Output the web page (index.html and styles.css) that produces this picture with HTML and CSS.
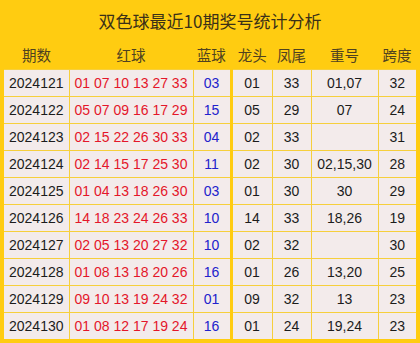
FILE: index.html
```html
<!DOCTYPE html>
<html lang="zh">
<head>
<meta charset="utf-8">
<link rel="stylesheet" href="styles.css">
</head>
<body>
<div class="panel">
  <div class="title">双色球最近10期奖号统计分析</div>
  <table class="stats">
    <colgroup>
      <col class="c-issue"><col class="c-red"><col class="c-blue"><col class="c-head"><col class="c-tail"><col class="c-rep"><col class="c-span">
    </colgroup>
    <thead>
      <tr><th>期数</th><th>红球</th><th>蓝球</th><th class="split">龙头</th><th>凤尾</th><th>重号</th><th>跨度</th></tr>
    </thead>
    <tbody>
      <tr><td>2024121</td><td class="red">01 07 10 13 27 33</td><td class="blue">03</td><td class="split">01</td><td>33</td><td>01,07</td><td>32</td></tr>
      <tr><td>2024122</td><td class="red">05 07 09 16 17 29</td><td class="blue">15</td><td class="split">05</td><td>29</td><td>07</td><td>24</td></tr>
      <tr><td>2024123</td><td class="red">02 15 22 26 30 33</td><td class="blue">04</td><td class="split">02</td><td>33</td><td></td><td>31</td></tr>
      <tr><td>2024124</td><td class="red">02 14 15 17 25 30</td><td class="blue">11</td><td class="split">02</td><td>30</td><td>02,15,30</td><td>28</td></tr>
      <tr><td>2024125</td><td class="red">01 04 13 18 26 30</td><td class="blue">03</td><td class="split">01</td><td>30</td><td>30</td><td>29</td></tr>
      <tr><td>2024126</td><td class="red">14 18 23 24 26 33</td><td class="blue">10</td><td class="split">14</td><td>33</td><td>18,26</td><td>19</td></tr>
      <tr><td>2024127</td><td class="red">02 05 13 20 27 32</td><td class="blue">10</td><td class="split">02</td><td>32</td><td></td><td>30</td></tr>
      <tr><td>2024128</td><td class="red">01 08 13 18 20 26</td><td class="blue">16</td><td class="split">01</td><td>26</td><td>13,20</td><td>25</td></tr>
      <tr><td>2024129</td><td class="red">09 10 13 19 24 32</td><td class="blue">01</td><td class="split">09</td><td>32</td><td>13</td><td>23</td></tr>
      <tr><td>2024130</td><td class="red">01 08 12 17 19 24</td><td class="blue">16</td><td class="split">01</td><td>24</td><td>19,24</td><td>23</td></tr>
    </tbody>
  </table>
</div>
</body>
</html>
```
FILE: styles.css
```css
html, body {
  margin: 0;
  padding: 0;
  background: #ffcc11;
}
.panel {
  width: 420px;
  height: 343px;
  box-sizing: border-box;
  padding: 0 4px 4px 4px;
  background: #ffcc11;
  font-family: "Liberation Sans", "Noto Sans CJK SC", sans-serif;
}
.title {
  height: 40px;
  line-height: 42px;
  text-align: center;
  font-family: "Noto Sans CJK SC", sans-serif;
  font-size: 17px;
  color: #3a3018;
}
.stats {
  width: 412px;
  border-collapse: collapse;
  table-layout: fixed;
}
.c-issue { width: 65px; }
.c-red { width: 124px; }
.c-blue { width: 38px; }
.c-head { width: 41px; }
.c-tail { width: 39px; }
.c-rep { width: 67px; }
.c-span { width: 38px; }
.stats th {
  height: 28px;
  padding: 0 0 1px 0;
  font-family: "Noto Sans CJK SC", sans-serif;
  font-weight: normal;
  font-size: 14.5px;
  color: #4f4220;
  text-align: center;
  border: none;
}
.stats td {
  height: 26px;
  padding: 0;
  text-align: center;
  font-size: 14px;
  color: #1c1c1c;
  background: #f3ebeb;
  border: 1px solid #f6cf3c;
}
.stats tbody tr:first-child td { border-top: 1px solid #f6cf3c; }
.stats td:first-child { border-left: none; }
.stats td:last-child { border-right: none; }
.stats tbody tr:last-child td { border-bottom: none; }
.stats td.split, .stats th.split { border-left: 3px solid #ffcc11; }
.stats td.red { color: #e4162a; }
.stats td.blue { color: #2222cc; }
```
